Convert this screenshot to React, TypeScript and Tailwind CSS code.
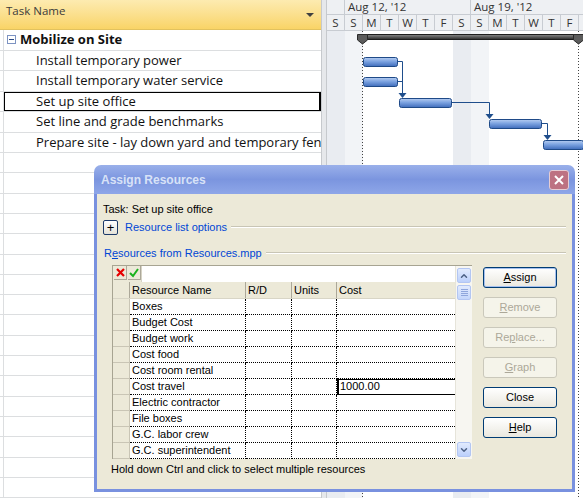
import React from 'react';
import { ChevronUp, ChevronDown } from 'lucide-react';

const TASKS = [
  { name: 'Mobilize on Site', summary: true },
  { name: 'Install temporary power' },
  { name: 'Install temporary water service' },
  { name: 'Set up site office', selected: true },
  { name: 'Set line and grade benchmarks' },
  { name: 'Prepare site - lay down yard and temporary fencing' },
];

const DAYS = ['S', 'S', 'M', 'T', 'W', 'T', 'F', 'S', 'S', 'M', 'T', 'W', 'T', 'F'];

const RESOURCES = [
  'Boxes',
  'Budget Cost',
  'Budget work',
  'Cost food',
  'Cost room rental',
  'Cost travel',
  'Electric contractor',
  'File boxes',
  'G.C. labor crew',
  'G.C. superintendent',
];

const TaskTable = () => {
  const rows = Array.from({ length: 23 }, (_, i) => TASKS[i]);
  return (
    <div className="w-[321px] shrink-0 flex flex-col">
      <div className="h-[31px] border-b border-[#e2c25e] bg-gradient-to-b from-[#fdebb0] to-[#f9d466] flex items-start justify-between pt-[3px] pl-[6px] pr-[7px]">
        <span className="text-[11.5px] leading-[15px] text-[#3b3b3b]">Task Name</span>
        <svg width="8" height="4" className="mt-[10px]">
          <polygon points="0,0 8,0 4,4" fill="#404040" />
        </svg>
      </div>
      {rows.map((t, i) => (
        <div key={i} className="h-[21px] border-b border-[#dcdee0] flex">
          <div className="w-[4px] h-full border-r border-[#dcdee0] shrink-0" />
          <div className="relative flex-1 flex items-center overflow-hidden whitespace-nowrap">
            {t && t.summary && (
              <>
                <div className="ml-[3px] w-[9px] h-[9px] border border-[#7d93c2] flex items-center justify-center bg-white">
                  <div className="w-[5px] h-px bg-[#2b4a86]" />
                </div>
                <span className="ml-[4px] text-[13px] font-bold text-[#111]">{t.name}</span>
              </>
            )}
            {t && !t.summary && (
              <span className="pl-[32px] text-[13px] text-[#111]">{t.name}</span>
            )}
            {t && t.selected && (
              <div className="absolute -left-px -top-px -bottom-px right-0 border-2 border-black" />
            )}
          </div>
        </div>
      ))}
    </div>
  );
};

const GanttChart = () => (
  <div className="w-[256px] shrink-0 flex flex-col">
    <div className="h-[15px] border-b border-[#c8ccd2] bg-[#eef0f3] flex text-[11.5px] leading-[14px] text-[#333]">
      <div className="w-[18px] border-r border-[#c8ccd2]" />
      <div className="w-[126px] border-r border-[#c8ccd2] pl-[3px]">Aug 12, '12</div>
      <div className="flex-1 pl-[3px]">Aug 19, '12</div>
    </div>
    <div className="h-[16px] border-b border-[#c8ccd2] bg-[#eef0f3] flex text-[11.5px] leading-[15px] text-[#333]">
      {DAYS.map((d, i) => (
        <div key={i} className="w-[18px] shrink-0 border-r border-[#c8ccd2] text-center">
          {d}
        </div>
      ))}
      <div className="flex-1" />
    </div>
    <svg width="256" height="467" className="block">
      <defs>
        <linearGradient id="taskbar" x1="0" y1="0" x2="0" y2="1">
          <stop offset="0" stopColor="#b6cdf1" />
          <stop offset="0.45" stopColor="#7ba2e0" />
          <stop offset="1" stopColor="#3f6cbb" />
        </linearGradient>
        <linearGradient id="sumbar" x1="0" y1="0" x2="0" y2="1">
          <stop offset="0" stopColor="#8c8c8c" />
          <stop offset="1" stopColor="#2a2a2a" />
        </linearGradient>
      </defs>
      <rect x="0" y="0" width="18" height="467" fill="#e9ecf1" />
      <rect x="18" y="0" width="18" height="467" fill="#f2f4f7" />
      <rect x="126" y="0" width="18" height="467" fill="#e9ecf1" />
      <rect x="144" y="0" width="18" height="467" fill="#f2f4f7" />
      <line x1="35.5" y1="0" x2="35.5" y2="467" stroke="#444" strokeDasharray="1 2" />
      <line x1="251.5" y1="0" x2="251.5" y2="467" stroke="#444" strokeDasharray="1 2" />

      <rect x="33.5" y="3.5" width="230" height="5" fill="url(#sumbar)" stroke="#1e1e1e" />
      <polygon points="30.5,3.5 40.5,3.5 40.5,9 35.5,13 30.5,9" fill="#5c5c5c" stroke="#2a2a2a" />
      <polygon points="246.5,3.5 256.5,3.5 256.5,9 251.5,13 246.5,9" fill="#5c5c5c" stroke="#2a2a2a" />

      <path d="M71,30.5 H75.5 V62" fill="none" stroke="#1f4e8c" />
      <path d="M71,50.5 H75.5" fill="none" stroke="#1f4e8c" />
      <polygon points="71.5,62 79.5,62 75.5,67" fill="#1f4e8c" />
      <path d="M125,71.5 H162.5 V83" fill="none" stroke="#1f4e8c" />
      <polygon points="158.5,83 166.5,83 162.5,88" fill="#1f4e8c" />
      <path d="M215,92.5 H220.5 V104" fill="none" stroke="#1f4e8c" />
      <polygon points="216.5,104 224.5,104 220.5,109" fill="#1f4e8c" />

      <rect x="36.5" y="26.5" width="34" height="9" rx="2" fill="url(#taskbar)" stroke="#1f4a88" />
      <rect x="36.5" y="46.5" width="34" height="9" rx="2" fill="url(#taskbar)" stroke="#1f4a88" />
      <rect x="72.5" y="67.5" width="52" height="9" rx="2" fill="url(#taskbar)" stroke="#1f4a88" />
      <rect x="162.5" y="88.5" width="52" height="9" rx="2" fill="url(#taskbar)" stroke="#1f4a88" />
      <rect x="216.5" y="109.5" width="40" height="9" rx="2" fill="url(#taskbar)" stroke="#1f4a88" />
    </svg>
  </div>
);

const XpButton = ({
  children,
  disabled,
  isDefault,
}: {
  children: React.ReactNode;
  disabled?: boolean;
  isDefault?: boolean;
}) => (
  <div
    className={`h-[21px] w-[74px] rounded-[3px] border flex items-center justify-center text-[11px] ${
      disabled
        ? 'border-[#cac8bb] bg-[#f5f4ea] text-[#aca899]'
        : 'border-[#003c74] bg-gradient-to-b from-[#ffffff] to-[#eae8df] text-black'
    } ${isDefault ? 'shadow-[inset_0_0_0_1px_#a6c0ee]' : ''}`}
  >
    {children}
  </div>
);

const ScrollBtn = ({ children }: { children: React.ReactNode }) => (
  <div className="h-[15px] rounded-[2px] border border-[#b3c6f2] bg-gradient-to-b from-[#e2ebfe] to-[#bcd0fb] flex items-center justify-center text-[#4d6185]">
    {children}
  </div>
);

const ResourceGrid = () => (
  <div className="w-[360px] h-[194px] border-t border-l border-[#a7a492] flex bg-white">
    <div className="w-[342px] flex flex-col">
      <div className="h-[16px] flex">
        <div className="w-[28px] bg-[#ece9d8] flex items-start gap-px pl-px">
          <div className="w-[13px] h-[14px] bg-[#ece9d8] border-r border-b border-[#aca899] flex items-center justify-center">
            <svg width="9" height="9">
              <path d="M1,1 L8,8 M8,1 L1,8" stroke="#e60000" strokeWidth="2.2" />
            </svg>
          </div>
          <div className="w-[13px] h-[14px] bg-[#ece9d8] border-r border-b border-[#aca899] flex items-center justify-center">
            <svg width="10" height="10">
              <path d="M1,5 L4,8 L9,1" fill="none" stroke="#19b21c" strokeWidth="2" />
            </svg>
          </div>
        </div>
        <div className="flex-1 bg-white border-l border-[#d6d3c4]" />
      </div>
      <div className="h-[17px] flex bg-[#ece9d8] border-b border-[#d8d5c6] text-[11px] leading-[16px]">
        <div className="w-[17px] border-r border-[#aca899]" />
        <div className="w-[116px] border-r border-[#aca899] pl-[2px]">Resource Name</div>
        <div className="w-[46px] border-r border-[#aca899] pl-[2px]">R/D</div>
        <div className="w-[45px] border-r border-[#aca899] pl-[2px]">Units</div>
        <div className="w-[118px] pl-[2px]">Cost</div>
      </div>
      {RESOURCES.map((r, i) => (
        <div key={r} className="h-[16px] flex text-[11px] leading-[15px]">
          <div className="w-[17px] bg-[#ece9d8] border-r border-b border-[#c9c5b5]" />
          <div className="w-[116px] border-r border-b border-dotted border-black pl-[2px] whitespace-nowrap">{r}</div>
          <div className="w-[46px] border-r border-b border-dotted border-black" />
          <div className="w-[45px] border-r border-b border-dotted border-black" />
          {i === 5 ? (
            <div className="w-[118px] border-b border-black shadow-[inset_2px_1px_0_#000] pl-[3px]">1000.00</div>
          ) : (
            <div className="w-[118px] border-b border-dotted border-black" />
          )}
        </div>
      ))}
    </div>
    <div className="w-[17px] bg-[#f7f6f1] border-l border-[#e6e4da] flex flex-col px-px pt-[2px] pb-[2px]">
      <ScrollBtn>
        <ChevronUp size={10} strokeWidth={3.5} />
      </ScrollBtn>
      <div className="mt-[2px] h-[15px] rounded-[2px] border border-[#b3c6f2] bg-gradient-to-b from-[#e2ebfe] to-[#c4d6fb] flex flex-col items-center justify-center gap-px">
        <div className="w-[7px] h-px bg-[#8fa6dc]" />
        <div className="w-[7px] h-px bg-[#8fa6dc]" />
        <div className="w-[7px] h-px bg-[#8fa6dc]" />
        <div className="w-[7px] h-px bg-[#8fa6dc]" />
      </div>
      <div className="flex-1" />
      <ScrollBtn>
        <ChevronDown size={10} strokeWidth={3.5} />
      </ScrollBtn>
    </div>
  </div>
);

const AssignDialog = () => (
  <div className="absolute left-[94px] top-[165px] w-[481px] h-[327px] flex flex-col font-['Liberation_Sans',Arial,sans-serif]">
    <div className="h-[29px] rounded-t-[7px] bg-gradient-to-b from-[#9ab0ea] via-[#7b95df] to-[#8ea6e8] flex items-start justify-between pl-[7px] pr-[6px]">
      <span className="mt-[8px] text-[12px] leading-[14px] font-bold text-[#d8e2f7]">Assign Resources</span>
      <div className="mt-[5px] w-[20px] h-[20px] rounded-[3px] border border-[#e6cdd3] bg-[#bd7282] flex items-center justify-center">
        <svg width="10" height="10">
          <path d="M1,1 L9,9 M9,1 L1,9" stroke="#ffffff" strokeWidth="2" />
        </svg>
      </div>
    </div>
    <div className="flex-1 border-x-[3px] border-b-[3px] border-[#7991df] bg-[#ece9d8] flex flex-col pl-[6px] text-[11px] text-black">
      <div className="mt-[9px] h-[13px] leading-[13px]">Task: Set up site office</div>
      <div className="mt-[3px] h-[16px] flex items-center pr-[6px]">
        <div className="w-[15px] h-[15px] rounded-[2px] border border-[#1c3a6a] bg-gradient-to-b from-white to-[#e4e2d8] flex items-center justify-center text-[13px] leading-[13px]">
          +
        </div>
        <span className="ml-[7px] text-[#0046d5]">Resource list options</span>
        <div className="ml-[4px] flex-1 border-t border-[#c8c5b5] border-b border-b-white" />
      </div>
      <div className="mt-[11px] h-[14px] flex items-center pr-[6px]">
        <span className="ml-px text-[#0046d5]">
          R<span className="underline">e</span>sources from Resources.mpp
        </span>
        <div className="ml-[4px] flex-1 border-t border-[#c8c5b5] border-b border-b-white" />
      </div>
      <div className="mt-[5px] flex">
        <div className="ml-[9px]">
          <ResourceGrid />
        </div>
        <div className="ml-[11px] mt-[2px] flex flex-col gap-[9px]">
          <XpButton isDefault>
            <span>
              <span className="underline">A</span>ssign
            </span>
          </XpButton>
          <XpButton disabled>
            <span>
              <span className="underline">R</span>emove
            </span>
          </XpButton>
          <XpButton disabled>
            <span>
              Re<span className="underline">p</span>lace...
            </span>
          </XpButton>
          <XpButton disabled>
            <span>
              <span className="underline">G</span>raph
            </span>
          </XpButton>
          <XpButton>Close</XpButton>
          <XpButton>
            <span>
              <span className="underline">H</span>elp
            </span>
          </XpButton>
        </div>
      </div>
      <div className="mt-[4px] ml-[8px] h-[13px] leading-[13px]">
        Hold down Ctrl and click to select multiple resources
      </div>
    </div>
  </div>
);

export default function App() {
  return (
    <div className="relative w-[583px] h-[498px] overflow-hidden bg-white font-['Open_Sans',sans-serif]">
      <div className="flex h-full">
        <TaskTable />
        <div className="w-[6px] shrink-0 border-l border-[#a3a5a8] border-r border-[#c6c9cd] bg-[#e6e8eb]" />
        <GanttChart />
      </div>
      <AssignDialog />
    </div>
  );
}
